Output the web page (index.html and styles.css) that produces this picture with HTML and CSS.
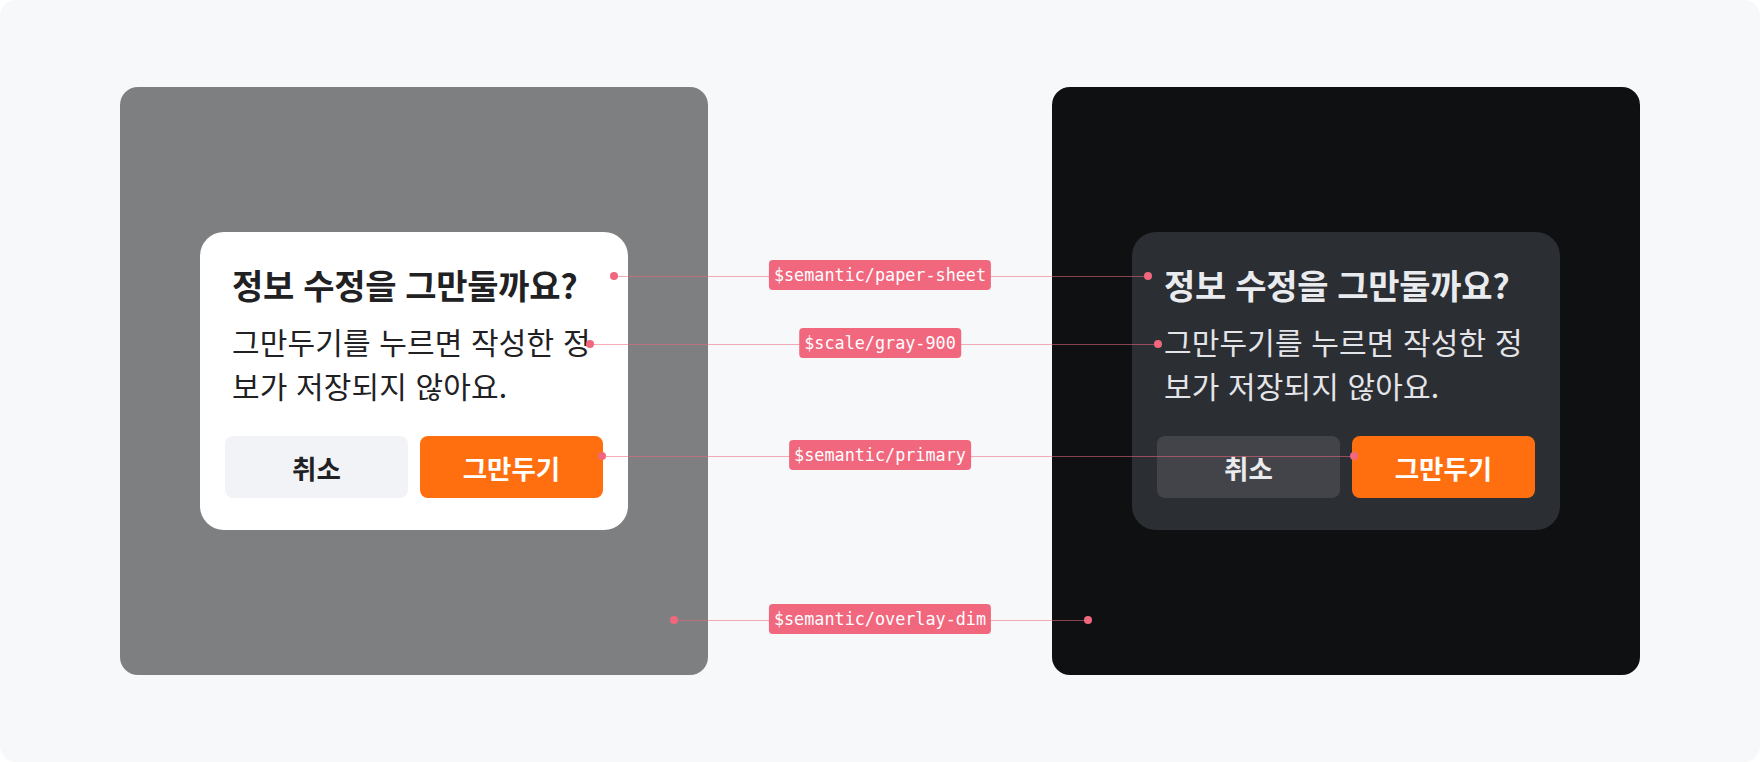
FILE: index.html
```html
<!DOCTYPE html>
<html lang="ko">
<head>
<meta charset="utf-8">
<title>Alert dialog tokens</title>
<link rel="stylesheet" href="styles.css">
</head>
<body>
<div class="canvas">
  <section class="panel panel-light">
    <div class="dialog">
      <div class="dialog-text">
        <h2 class="dialog-title">정보 수정을 그만둘까요?</h2>
        <p class="dialog-body">그만두기를 누르면 작성한 정<br>보가 저장되지 않아요.</p>
      </div>
      <div class="dialog-actions">
        <button class="btn btn-secondary">취소</button>
        <button class="btn btn-primary">그만두기</button>
      </div>
    </div>
  </section>
  <section class="panel panel-dark">
    <div class="dialog">
      <div class="dialog-text">
        <h2 class="dialog-title">정보 수정을 그만둘까요?</h2>
        <p class="dialog-body">그만두기를 누르면 작성한 정<br>보가 저장되지 않아요.</p>
      </div>
      <div class="dialog-actions">
        <button class="btn btn-secondary">취소</button>
        <button class="btn btn-primary">그만두기</button>
      </div>
    </div>
  </section>

  <div class="anno anno-paper"><span class="dot"></span><span class="dot"></span></div>
  <div class="anno anno-gray"><span class="dot"></span><span class="dot"></span></div>
  <div class="anno anno-primary"><span class="dot"></span><span class="dot"></span></div>
  <div class="anno anno-dim"><span class="dot"></span><span class="dot"></span></div>

  <span class="tag tag-paper">$semantic/paper-sheet</span>
  <span class="tag tag-gray">$scale/gray-900</span>
  <span class="tag tag-primary">$semantic/primary</span>
  <span class="tag tag-dim">$semantic/overlay-dim</span>
</div>
</body>
</html>
```

FILE: styles.css
```css
* { box-sizing: border-box; }

html, body {
  margin: 0;
  padding: 0;
  background: #ffffff;
}

body {
  font-family: "Noto Sans CJK KR", "Noto Sans", sans-serif;
}

.canvas {
  position: relative;
  width: 1760px;
  height: 762px;
  background: #f7f8fa;
  border-radius: 16px;
  display: flex;
  align-items: center;
  justify-content: space-between;
  padding: 0 120px;
  overflow: hidden;
}

.panel {
  width: 588px;
  height: 588px;
  border-radius: 18px;
  display: flex;
  align-items: center;
  justify-content: center;
}

.panel-light { background: #7e7f81; }
.panel-dark { background: #0f1012; }

.dialog {
  width: 428px;
  padding: 32px 25px 32px;
  border-radius: 24px;
  display: flex;
  flex-direction: column;
}

.panel-light .dialog { background: #ffffff; }
.panel-dark .dialog { background: #2b2e33; }

.dialog-text {
  padding: 0 7px;
  display: flex;
  flex-direction: column;
  gap: 14px;
}

.dialog-title {
  margin: 0;
  font-size: 34px;
  line-height: 42px;
  font-weight: 700;
  letter-spacing: -0.3px;
  white-space: nowrap;
}

.dialog-body {
  margin: 0;
  font-size: 30px;
  line-height: 43.5px;
  font-weight: 400;
  letter-spacing: 0.15px;
  white-space: nowrap;
}

.panel-light .dialog-title,
.panel-light .dialog-body { color: #212124; }

.panel-dark .dialog-title { color: #eaebee; }
.panel-dark .dialog-body { color: #e4e5e9; }

.dialog-actions {
  margin-top: 29px;
  display: grid;
  grid-template-columns: 1fr 1fr;
  gap: 12px;
}

.btn {
  height: 62px;
  border: 0;
  border-radius: 8px;
  font-family: "Noto Sans CJK KR", "Noto Sans", sans-serif;
  font-size: 26.5px;
  font-weight: 700;
  padding: 0;
}

.panel-light .btn-secondary { background: #f2f3f6; color: #212124; }
.panel-dark .btn-secondary { background: #434449; color: #eaebee; }

.btn-primary { background: #ff6f0f; color: #ffffff; }

/* annotation overlay */
.anno {
  position: absolute;
  height: 8px;
  display: flex;
  justify-content: space-between;
  align-items: center;
}

.anno::before {
  content: "";
  position: absolute;
  left: 4px;
  right: 4px;
  top: 3.5px;
  height: 1px;
  background: rgba(240, 103, 126, 0.55);
}

.dot {
  width: 8px;
  height: 8px;
  border-radius: 50%;
  background: #f0677e;
  position: relative;
}

.anno-paper   { left: 610px;  width: 542px; top: 272px; }
.anno-gray    { left: 586px;  width: 576px; top: 340px; }
.anno-primary { left: 598px;  width: 760px; top: 452px; }
.anno-dim     { left: 670px;  width: 422px; top: 616px; }

.tag {
  position: absolute;
  left: 880px;
  transform: translate(-50%, -50%);
  height: 30px;
  padding: 0 5px;
  border-radius: 4px;
  background: #f0677e;
  color: #ffffff;
  font-family: "DejaVu Sans Mono", "Liberation Mono", monospace;
  font-size: 16.8px;
  line-height: 30px;
  white-space: nowrap;
}

.tag-paper   { top: 275px; }
.tag-gray    { top: 343px; }
.tag-primary { top: 455px; }
.tag-dim     { top: 619px; }
```
